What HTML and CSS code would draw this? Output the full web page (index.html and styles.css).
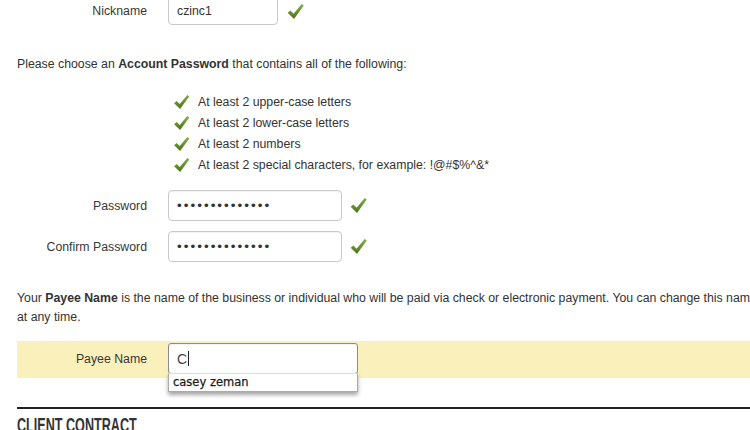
FILE: index.html
```html
<!DOCTYPE html>
<html>
<head>
<meta charset="utf-8">
<link rel="stylesheet" href="styles.css">
</head>
<body>
<svg width="0" height="0" class="defs">
  <defs>
    <linearGradient id="g" x1="0" y1="0" x2="0" y2="1">
      <stop offset="0" stop-color="#86b04a"/>
      <stop offset="1" stop-color="#4a7418"/>
    </linearGradient>
    <symbol id="check" viewBox="0 0 16 16">
      <path d="M0.6 9.2 L3.2 7.0 L6.2 10.0 L13.8 1.0 L15.8 2.4 L6.6 15.0 Z" fill="url(#g)"/>
    </symbol>
  </defs>
</svg>
<div class="page">
  <div class="row row-nick">
    <span class="lbl">Nickname</span>
    <div class="field f-nick">czinc1</div>
    <svg class="ok"><use href="#check"/></svg>
  </div>

  <p class="intro">Please choose an <b>Account Password</b> that contains all of the following:</p>

  <ul class="rules">
    <li><svg class="ok sm"><use href="#check"/></svg>At least 2 upper-case letters</li>
    <li><svg class="ok sm"><use href="#check"/></svg>At least 2 lower-case letters</li>
    <li><svg class="ok sm"><use href="#check"/></svg>At least 2 numbers</li>
    <li><svg class="ok sm"><use href="#check"/></svg>At least 2 special characters, for example: !@#$%^&amp;*</li>
  </ul>

  <div class="row row-pw">
    <span class="lbl">Password</span>
    <div class="field f-pw"><span class="dots">••••••••••••••</span></div>
    <svg class="ok"><use href="#check"/></svg>
  </div>
  <div class="row row-pw2">
    <span class="lbl">Confirm Password</span>
    <div class="field f-pw"><span class="dots">••••••••••••••</span></div>
    <svg class="ok"><use href="#check"/></svg>
  </div>

  <p class="note">Your <b>Payee Name</b> is the name of the business or individual who will be paid via check or electronic payment. You can change this name at any time.</p>

  <div class="band">
    <div class="row row-payee">
      <span class="lbl">Payee Name</span>
      <div class="combo">
        <div class="field f-payee">C<span class="caret"></span></div>
        <div class="suggest">casey zeman</div>
      </div>
    </div>
  </div>

  <div class="rule-line"></div>
  <h2 class="section">CLIENT CONTRACT</h2>
</div>
</body>
</html>
```

FILE: styles.css
```css
html, body {
  margin: 0;
  padding: 0;
  background: #ffffff;
  overflow: hidden;
}
body {
  width: 750px;
  height: 430px;
  font-family: "Liberation Sans", Arial, sans-serif;
  font-size: 12.3px;
  color: #333333;
}
.defs {
  position: absolute;
  width: 0;
  height: 0;
}
.page {
  padding-left: 17px;
  width: 733px;
  white-space: nowrap;
}
.row {
  display: flex;
  align-items: center;
}
.lbl {
  width: 130px;
  text-align: right;
  margin-right: 21px;
  color: #383838;
}
.field {
  box-sizing: border-box;
  background: #fff;
  border: 1px solid #c9c9c9;
  border-radius: 4px;
  box-shadow: inset 0 1px 1px rgba(0,0,0,0.06);
  padding-left: 8px;
  display: flex;
  align-items: center;
  color: #333;
}
.ok {
  width: 17px;
  height: 17px;
  margin-left: 8px;
}
.row-nick {
  margin-top: -3px;
  height: 28px;
}
.f-nick {
  width: 110px;
  height: 28px;
}
.row-nick .ok {
  margin-left: 9px;
}
.intro {
  margin: 31px 0 0;
  line-height: 16px;
}
.rules {
  list-style: none;
  margin: 19px 0 0;
  padding: 0 0 0 156px;
}
.rules li {
  height: 21px;
  display: flex;
  align-items: center;
}
.ok.sm {
  width: 17px;
  height: 16px;
  margin: 0 8px 0 0;
}
.row-pw {
  margin-top: 15px;
}
.row-pw2 {
  margin-top: 10px;
}
.f-pw {
  width: 174px;
  height: 31px;
}
.dots {
  font-size: 13.5px;
  letter-spacing: 2px;
  color: #333;
}
.note {
  margin: 27px 0 0;
  line-height: 19px;
  white-space: normal;
  width: 742px;
}
.band {
  margin-top: 14px;
  background: #faf0bb;
  height: 37px;
  padding-top: 2px;
  box-sizing: border-box;
  margin-right: -17px;
}
.combo {
  position: relative;
}
.f-payee {
  width: 190px;
  height: 31px;
  border: 1px solid #8a8a8a;
  border-radius: 3px;
  font-size: 14px;
  color: #444;
}
.caret {
  display: inline-block;
  width: 1px;
  height: 15px;
  background: #222;
  margin-left: 1px;
}
.suggest {
  position: absolute;
  left: 0;
  top: 30px;
  width: 190px;
  height: 19px;
  box-sizing: border-box;
  background: #fff;
  border: 1px solid #aaa;
  border-top-color: #ddd;
  box-shadow: 0 3px 4px rgba(0,0,0,0.35);
  padding-left: 4px;
  font-family: "DejaVu Sans", sans-serif;
  font-size: 11.5px;
  line-height: 17px;
  color: #1a1a1a;
  -webkit-text-stroke: 0.25px #1a1a1a;
}
.rule-line {
  margin-top: 29px;
  height: 2px;
  background: #222;
  margin-right: -17px;
}
.section {
  margin: 5px 0 0;
  font-family: "Liberation Sans", sans-serif;
  font-weight: bold;
  font-size: 21px;
  line-height: 22px;
  color: #333;
  transform: scaleX(0.6);
  transform-origin: left top;
}
```
